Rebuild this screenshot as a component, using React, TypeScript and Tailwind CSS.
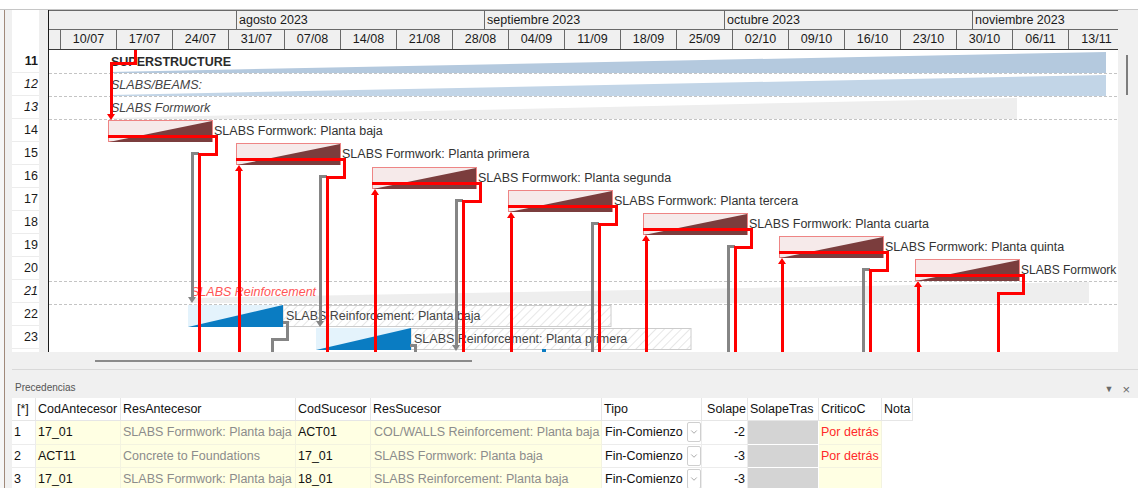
import { ChevronDown } from "lucide-react";

const months = [
  { label: "", w: "w-[188px]" },
  { label: "agosto 2023", w: "w-[248px]" },
  { label: "septiembre 2023", w: "w-[240px]" },
  { label: "octubre 2023", w: "w-[248px]" },
  { label: "noviembre 2023", w: "w-[248px]" },
];

const weeks = [
  "10/07", "17/07", "24/07", "31/07", "07/08", "14/08", "21/08", "28/08", "04/09", "11/09",
  "18/09", "25/09", "02/10", "09/10", "16/10", "23/10", "30/10", "06/11", "13/11",
];

const rowNums = [
  { n: 11, cls: "font-bold" },
  { n: 12, cls: "italic" },
  { n: 13, cls: "italic" },
  { n: 14, cls: "" },
  { n: 15, cls: "" },
  { n: 16, cls: "" },
  { n: 17, cls: "" },
  { n: 18, cls: "" },
  { n: 19, cls: "" },
  { n: 20, cls: "" },
  { n: 21, cls: "italic" },
  { n: 22, cls: "" },
  { n: 23, cls: "" },
];

// formwork tasks: bar origin, where the outgoing red link drops, where the gray link drops
const formwork = [
  { x: 108, y: 120, xr: 199, xg: 192, gEnd: 303, label: "SLABS Formwork: Planta baja" },
  { x: 236, y: 143, xr: 327, xg: 320, gEnd: 327, label: "SLABS Formwork: Planta primera" },
  { x: 372, y: 167, xr: 463, xg: 456, gEnd: 351, label: "SLABS Formwork: Planta segunda" },
  { x: 508, y: 190, xr: 599, xg: 592, gEnd: 0, label: "SLABS Formwork: Planta tercera" },
  { x: 643, y: 213, xr: 735, xg: 728, gEnd: 0, label: "SLABS Formwork: Planta cuarta" },
  { x: 779, y: 236, xr: 870, xg: 863, gEnd: 0, label: "SLABS Formwork: Planta quinta" },
  { x: 915, y: 259, xr: 998, xg: 0, gEnd: 0, label: "SLABS Formwork" },
];

const reinforcement = [
  { x: 188, y: 305, hatchEnd: 611, label: "SLABS Reinforcement: Planta baja" },
  { x: 316, y: 328, hatchEnd: 691, label: "SLABS Reinforcement: Planta primera" },
];

const RED = "#ff0000";
const GRAY = "#858585";

function downArrow(x: number, tip: number, fill: string) {
  return <polygon points={`${x - 4},${tip - 6} ${x + 4},${tip - 6} ${x},${tip}`} fill={fill} />;
}

function upArrow(x: number, tip: number, fill: string) {
  return <polygon points={`${x - 4},${tip + 6} ${x + 4},${tip + 6} ${x},${tip}`} fill={fill} />;
}

function GanttBody() {
  const dashed = [73, 96, 119, 281, 304];
  return (
    <svg width={1069} height={302} viewBox="49 50 1069 302" className="block">
      <defs>
        <pattern id="hatch" width="6" height="6" patternUnits="userSpaceOnUse" patternTransform="rotate(45)">
          <rect width="6" height="6" fill="#ffffff" />
          <line x1="0" y1="0" x2="0" y2="6" stroke="#cfcfcf" strokeWidth="1" />
        </pattern>
      </defs>

      {/* summary wedges */}
      <polygon points="110,72 1106,52 1106,73 110,73" fill="#b4c9de" />
      <polygon points="110,95 1106,75 1106,96 110,96" fill="#c2d5e7" />
      <polygon points="110,118 1017,98 1017,119 110,119" fill="#eeeeee" />
      <polygon points="190,298 1089,282 1089,303 190,303" fill="#eeeeee" />

      {dashed.map((y) => (
        <line key={y} x1={49} x2={1118} y1={y + 0.5} y2={y + 0.5} stroke="#c4c4c4" strokeDasharray="3 2" />
      ))}

      <g fontFamily="'Liberation Sans', Arial, sans-serif" fontSize="12.5" fill="#2b2b2b">
        <text x={111} y={66} fontWeight="bold">SUPERSTRUCTURE</text>
        <text x={111} y={89} fontStyle="italic" fill="#444">SLABS/BEAMS:</text>
        <text x={111} y={112} fontStyle="italic" fill="#444">SLABS Formwork</text>
        <text x={191} y={296} fontStyle="italic" fill="#ff5555">SLABS Reinforcement</text>
      </g>

      {/* reinforcement tasks */}
      {reinforcement.map((r) => (
        <g key={r.label}>
          <rect x={r.x + 95} y={r.y + 0.5} width={r.hatchEnd - r.x - 95} height={21} fill="url(#hatch)" stroke="#cccccc" />
          <rect x={r.x} y={r.y} width={95} height={22} fill="#e4f3fc" />
          <polygon points={`${r.x},${r.y + 22} ${r.x + 95},${r.y} ${r.x + 95},${r.y + 22}`} fill="#0a7cc2" />
          <text x={r.x + 98} y={r.y + 15} fontFamily="'Liberation Sans', Arial, sans-serif" fontSize="12.5" fill="#444">
            {r.label}
          </text>
        </g>
      ))}
      <rect x={542} y={349} width={4} height={3} fill="#0a7cc2" />

      {/* formwork tasks */}
      {formwork.map((f, i) => (
        <g key={f.label}>
          <rect x={f.x + 0.5} y={f.y + 0.5} width={104} height={21} fill="#f6eaea" stroke="#ee8585" />
          <polygon points={`${f.x + 1},${f.y + 22} ${f.x + 104},${f.y + 1} ${f.x + 104},${f.y + 22}`} fill="#7b3d3d" />
          <text
            x={f.x + 106}
            y={f.y + 15}
            fontFamily="'Liberation Sans', Arial, sans-serif"
            fontSize={i === 6 ? 12 : 12.5}
            fill="#333"
          >
            {f.label}
          </text>
        </g>
      ))}

      {/* gray links */}
      <g fill="none" stroke={GRAY} strokeWidth={3} shapeRendering="crispEdges">
        {formwork
          .filter((f) => f.xg > 0)
          .map((f) => (
            <path key={f.xg} d={`M${f.xr} ${f.y + 33} H${f.xg} V${f.gEnd ? f.gEnd - 5 : 352}`} />
          ))}
        <path d="M283 322 H287 V339 H272 V352" />
        <path d="M410 345 H415 V352" />
      </g>
      {formwork
        .filter((f) => f.gEnd > 0)
        .map((f) => <g key={`ga${f.xg}`}>{downArrow(f.xg, f.gEnd, GRAY)}</g>)}

      {/* red links */}
      <g fill="none" stroke={RED} strokeWidth={3} shapeRendering="crispEdges">
        <path d="M135 50 V63 H111 V115" />
        {formwork.map((f, i) => (
          <path key={`r${i}`} d={`M${f.x} ${f.y + 16} H${f.x + 108} V${f.y + 34} H${f.xr} V352`} />
        ))}
        {formwork.slice(1).map((f, i) => (
          <path key={`ri${i}`} d={`M${f.x + 3} 352 V${f.y + 27}`} />
        ))}
      </g>
      {downArrow(111, 120, RED)}
      {formwork.slice(1).map((f, i) => (
        <g key={`ua${i}`}>{upArrow(f.x + 3, f.y + 22, RED)}</g>
      ))}
    </svg>
  );
}

const cols = [
  "w-[24px]", "w-[85px]", "w-[175px]", "w-[75px]", "w-[231px]",
  "w-[100px]", "w-[46px]", "w-[71px]", "w-[63px]", "w-[31px]",
];

const headers = ["[*]", "CodAntecesor", "ResAntecesor", "CodSucesor", "ResSucesor", "Tipo", "Solape", "SolapeTras", "CriticoC", "Nota"];

const links = [
  { n: 1, a: "17_01", ra: "SLABS Formwork: Planta baja", s: "ACT01", rs: "COL/WALLS Reinforcement: Planta baja", tipo: "Fin-Comienzo", sol: "-2", crit: "Por detrás" },
  { n: 2, a: "ACT11", ra: "Concrete to Foundations", s: "17_01", rs: "SLABS Formwork: Planta baja", tipo: "Fin-Comienzo", sol: "-3", crit: "Por detrás" },
  { n: 3, a: "17_01", ra: "SLABS Formwork: Planta baja", s: "18_01", rs: "SLABS Reinforcement: Planta baja", tipo: "Fin-Comienzo", sol: "-3", crit: "" },
];

function Precedencias() {
  const cell = "h-full shrink-0 border-r border-b flex items-center overflow-hidden whitespace-nowrap";
  return (
    <div className="shrink-0 bg-white">
      <div className="flex h-[23px]">
        {headers.map((h, i) => (
          <div
            key={h}
            className={`${cols[i]} ${cell} border-[#e6e6e6] text-[#111] ${i === 6 ? "justify-end pr-[1px]" : "pl-[2px]"} ${i === 0 ? "pl-[5px]" : ""}`}
          >
            {h}
          </div>
        ))}
      </div>
      {links.map((r) => (
        <div key={r.n} className="flex h-[23.5px]">
          <div className={`${cols[0]} ${cell} border-[#ececec] pl-[2px] text-[#111]`}>{r.n}</div>
          <div className={`${cols[1]} ${cell} border-[#f3f3e0] bg-[#ffffe3] pl-[2px] text-[#111]`}>{r.a}</div>
          <div className={`${cols[2]} ${cell} border-[#f3f3e0] bg-[#ffffe3] pl-[2px] text-[#8c8c8c]`}>{r.ra}</div>
          <div className={`${cols[3]} ${cell} border-[#f3f3e0] bg-[#ffffe3] pl-[2px] text-[#111]`}>{r.s}</div>
          <div className={`${cols[4]} ${cell} border-[#f3f3e0] bg-[#ffffe3] pl-[3px] text-[#8c8c8c]`}>{r.rs}</div>
          <div className={`${cols[5]} ${cell} border-[#ececec] justify-between pl-[3px] text-[#111]`}>
            <span>{r.tipo}</span>
            <span className="flex h-[20px] w-[14px] items-center justify-center rounded-[2px] border border-[#cfcfcf] bg-white">
              <ChevronDown size={10} strokeWidth={1.5} className="text-[#777]" />
            </span>
          </div>
          <div className={`${cols[6]} ${cell} border-[#ececec] justify-end pr-[2px] text-[#111]`}>{r.sol}</div>
          <div className={`${cols[7]} ${cell} border-white bg-[#d4d4d4]`} />
          <div className={`${cols[8]} ${cell} border-[#f3f3e0] bg-[#ffffe3] pl-[2px] text-[#ff2a2a]`}>{r.crit}</div>
        </div>
      ))}
    </div>
  );
}

export default function App() {
  return (
    <div className="h-[488px] w-[1138px] overflow-hidden bg-white font-['Liberation_Sans',Arial,sans-serif] text-[12.5px] leading-none">
      <div className="h-[9px]" />
      <div className="flex h-[479px] border-t border-[#c6c6c6]">
        {/* window edge */}
        <div className="flex w-[12px] shrink-0">
          <div className="w-[4px] bg-[#f6f6f6]" />
          <div className="w-[1px] bg-[#a0897a]" />
          <div className="flex-1 bg-[#f0f0f0]" />
        </div>

        <div className="flex w-[1126px] flex-col">
          <div className="flex h-[342px] shrink-0">
            {/* row numbers */}
            <div className="w-[27px] shrink-0 bg-white">
              <div className="h-[40px]" />
              {rowNums.map((r) => (
                <div
                  key={r.n}
                  className={`flex h-[23px] items-center justify-end border-b border-[#ececec] pr-[1px] text-[#1a1a1a] ${r.cls}`}
                >
                  {r.n}
                </div>
              ))}
            </div>
            <div className="w-[9px] shrink-0 bg-[#efefef]" />

            {/* gantt */}
            <div className="w-[1070px] shrink-0 overflow-hidden border-l border-[#1a1a1a]">
              <div className="flex h-[20px] border-t border-b border-[#6a6a6a] bg-[#f0f0f0]">
                {months.map((m, i) => (
                  <div
                    key={i}
                    className={`${m.w} flex h-full shrink-0 items-center border-r border-[#6a6a6a] pl-[2px] text-[#1a1a1a]`}
                  >
                    {m.label}
                  </div>
                ))}
              </div>
              <div className="flex h-[20px] border-b border-[#3a3a3a] bg-[#f0f0f0]">
                <div className="h-full w-[12px] shrink-0 border-r border-[#6a6a6a]" />
                {weeks.map((w) => (
                  <div
                    key={w}
                    className="flex h-full w-[56px] shrink-0 items-center justify-center border-r border-[#6a6a6a] text-[#1a1a1a]"
                  >
                    {w}
                  </div>
                ))}
              </div>
              <GanttBody />
            </div>

            {/* vertical scrollbar */}
            <div className="w-[20px] shrink-0 bg-[#f0f0f0] pl-[8px] pt-[45px]">
              <div className="h-[40px] w-[2px] bg-[#7d7d7d]" />
            </div>
          </div>

          {/* horizontal scrollbar */}
          <div className="h-[18px] shrink-0 border-b border-[#d9d9d9] bg-[#f0f0f0] pl-[83px] pt-[8px]">
            <div className="h-[2px] w-[377px] bg-[#8a8a8a]" />
          </div>

          {/* precedence panel */}
          <div className="flex h-[28px] shrink-0 items-start justify-between bg-[#f0f0f0] pl-[3px] pr-[8px] pt-[13px]">
            <span className="text-[10px] text-[#555]">Precedencias</span>
            <span className="flex items-center gap-[9px] text-[#6a6a6a]">
              <span className="text-[9px]">▼</span>
              <span className="text-[13px]">×</span>
            </span>
          </div>
          <Precedencias />
        </div>
      </div>
    </div>
  );
}
